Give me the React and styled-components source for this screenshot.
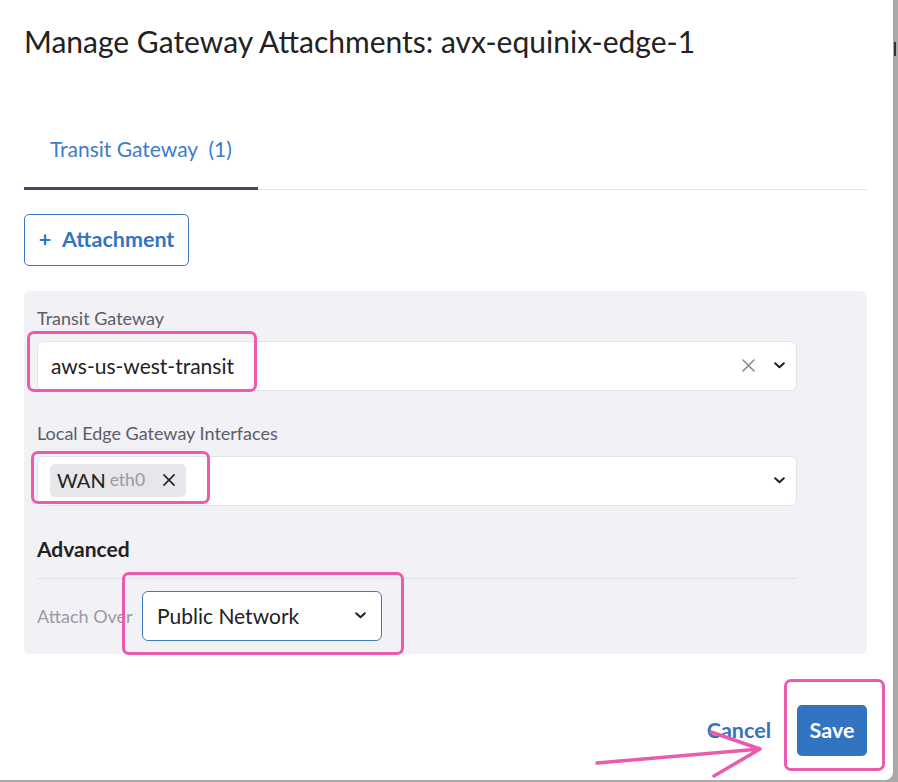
import React from "react";
import styled, { createGlobalStyle } from "styled-components";

const Global = createGlobalStyle`
  html, body { margin: 0; padding: 0; }
  body {
    background: #a9a9a9;
    font-family: "Lato", "Noto Sans", sans-serif;
    color: #222;
    overflow: hidden;
  }
`;

const Page = styled.div`
  display: flex;
  width: 898px;
  height: 782px;
`;

const Modal = styled.div`
  position: relative;
  width: 893px;
  height: 780px;
  background: #fff;
  border-bottom-right-radius: 8px;
  padding: 0 26px 0 24px;
  box-sizing: border-box;
  display: flex;
  flex-direction: column;
`;

const Title = styled.h1`
  margin: 0;
  height: 112px;
  padding-top: 23px;
  box-sizing: border-box;
  font-size: 30px;
  line-height: 36px;
  font-weight: 400;
  color: #222;
`;

const TabBar = styled.div`
  display: flex;
  border-bottom: 1px solid #e4e4e8;
`;

const Tab = styled.div`
  padding: 25px 26px 26px;
  line-height: 24px;
  font-size: 21px;
  color: #3d7cc9;
  border-bottom: 3px solid ${(p) => (p.$active ? "#4a4568" : "transparent")};
  margin-bottom: -1px;
  width: 234px;
  box-sizing: border-box;
  white-space: pre;
`;

const OutlineButton = styled.button`
  align-self: flex-start;
  margin-top: 24px;
  height: 52px;
  width: 165px;
  border: 1px solid #3a78c2;
  border-radius: 5px;
  background: #fff;
  color: #3273c2;
  font-family: inherit;
  font-size: 21.5px;
  font-weight: 700;
  display: flex;
  align-items: center;
  justify-content: center;
  gap: 11px;
  padding: 0 0 2px;
`;

const Panel = styled.div`
  margin-top: 25px;
  background: #f1f1f6;
  border-radius: 6px;
  padding: 15px 70px 13px 13px;
  display: flex;
  flex-direction: column;
`;

const Label = styled.div`
  font-size: 18px;
  line-height: 24px;
  color: #5c5c68;
  margin-top: ${(p) => p.$mt || 0}px;
  margin-bottom: 11px;
`;

const SelectBox = styled.div`
  height: 50px;
  box-sizing: border-box;
  width: ${(p) => p.$w || "100%"};
  background: #fff;
  border: 1px solid ${(p) => (p.$focus ? "#3a78c2" : "#e2e2e8")};
  border-radius: 6px;
  display: flex;
  align-items: center;
  padding: 0 ${(p) => p.$pr || 11}px 2px ${(p) => p.$pl || 13}px;
  font-size: 21px;
  color: #222;
`;

const Value = styled.div`
  flex: 1;
`;

const Indicators = styled.div`
  display: flex;
  align-items: center;
  gap: 19px;
`;

const Chip = styled.div`
  display: flex;
  align-items: center;
  height: 33px;
  width: 136px;
  box-sizing: border-box;
  background: #e6e6eb;
  border-radius: 5px;
  padding: 0 11px 1px 7px;
  font-size: 20px;
  color: #222;
`;

const ChipSub = styled.span`
  font-size: 17.5px;
  color: #9a9aa2;
  margin-left: 4px;
  flex: 1;
`;

const SectionTitle = styled.div`
  margin-top: 30px;
  font-size: 21px;
  line-height: 26px;
  font-weight: 700;
  color: #222;
  padding-bottom: 16px;
  border-bottom: 1px solid #e2e2ea;
`;

const Row = styled.div`
  margin-top: 12px;
  display: flex;
  align-items: center;
  gap: 14px;
`;

const RowLabel = styled.div`
  font-size: 18px;
  color: #9a9aa2;
  width: 91px;
  white-space: nowrap;
  overflow: visible;
`;

const Footer = styled.div`
  margin-top: 51px;
  display: flex;
  justify-content: flex-end;
  align-items: center;
  gap: 26px;
`;

const LinkButton = styled.button`
  border: none;
  background: none;
  padding: 0 0 2px;
  font-family: inherit;
  font-size: 21.5px;
  font-weight: 700;
  color: #3273c2;
`;

const PrimaryButton = styled.button`
  width: 70px;
  height: 51px;
  border: none;
  border-radius: 5px;
  background: #3273c2;
  color: #fff;
  font-family: inherit;
  font-size: 21.5px;
  font-weight: 700;
  padding: 0 0 2px;
`;

const Backdrop = styled.div`
  flex: 1;
  display: flex;
  flex-direction: column;
  padding-top: 42px;
`;

const BackdropMark = styled.div`
  width: 2px;
  height: 14px;
  margin-left: 1px;
  background: #333;
`;

const Annotation = styled.div`
  position: absolute;
  left: ${(p) => p.$x}px;
  top: ${(p) => p.$y}px;
  width: ${(p) => p.$w}px;
  height: ${(p) => p.$h}px;
  box-sizing: border-box;
  border: 3px solid #ea5bad;
  border-radius: 7px;
  pointer-events: none;
`;

const ArrowSvg = styled.svg`
  position: absolute;
  left: 0;
  top: 0;
  pointer-events: none;
`;

const Chevron = ({ color = "#222" }) => (
  <svg width="11" height="7" viewBox="0 0 11 7">
    <path d="M1.2 1.2 L5.5 5.3 L9.8 1.2" fill="none" stroke={color} strokeWidth="2" strokeLinecap="round" strokeLinejoin="round" />
  </svg>
);

const Cross = ({ color = "#8a8a8a", size = 13, w = 1.6 }) => (
  <svg width={size} height={size} viewBox="0 0 13 13">
    <path d="M1 1 L12 12 M12 1 L1 12" fill="none" stroke={color} strokeWidth={w} strokeLinecap="round" />
  </svg>
);

export default function App() {
  return (
    <>
      <Global />
      <Page>
        <Modal>
          <Title>Manage Gateway Attachments: avx-equinix-edge-1</Title>
          <TabBar>
            <Tab $active>{"Transit Gateway  (1)"}</Tab>
          </TabBar>
          <OutlineButton>
            <span>+</span>
            <span>Attachment</span>
          </OutlineButton>
          <Panel>
            <Label>Transit Gateway</Label>
            <SelectBox>
              <Value>aws-us-west-transit</Value>
              <Indicators>
                <Cross />
                <Chevron />
              </Indicators>
            </SelectBox>
            <Label $mt={30}>Local Edge Gateway Interfaces</Label>
            <SelectBox $pl={12}>
              <Value>
                <Chip>
                  WAN<ChipSub>eth0</ChipSub>
                  <Cross color="#222" size={12} w={1.7} />
                </Chip>
              </Value>
              <Chevron />
            </SelectBox>
            <SectionTitle>Advanced</SectionTitle>
            <Row>
              <RowLabel>Attach Over</RowLabel>
              <SelectBox $w="240px" $focus $pl={14} $pr={15}>
                <Value>Public Network</Value>
                <Chevron />
              </SelectBox>
            </Row>
          </Panel>
          <Footer>
            <LinkButton>Cancel</LinkButton>
            <PrimaryButton>Save</PrimaryButton>
          </Footer>

          <Annotation $x={27} $y={331} $w={230} $h={61} />
          <Annotation $x={31} $y={451} $w={179} $h={53} />
          <Annotation $x={122} $y={572} $w={282} $h={83} />
          <Annotation $x={784} $y={679} $w={101} $h={92} />
          <ArrowSvg width="893" height="782" viewBox="0 0 893 782">
            <path
              d="M597 763 L760 749 M711 732 L760 749 L714 776"
              fill="none"
              stroke="#ea5bad"
              strokeWidth="3.5"
              strokeLinecap="round"
              strokeLinejoin="round"
            />
          </ArrowSvg>
        </Modal>
        <Backdrop>
          <BackdropMark />
        </Backdrop>
      </Page>
    </>
  );
}
